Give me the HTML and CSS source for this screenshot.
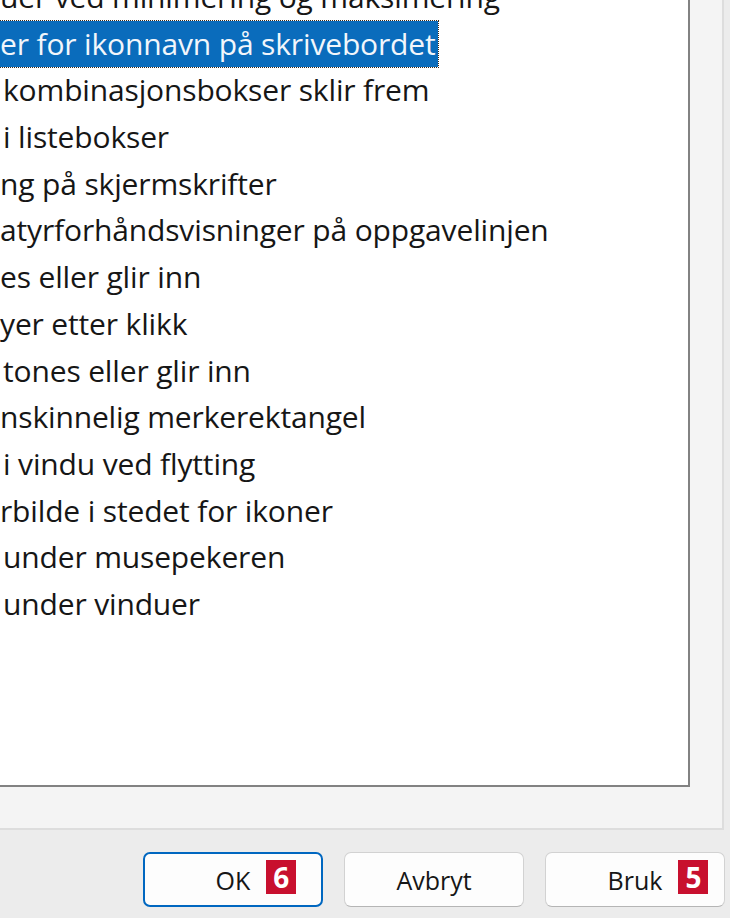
FILE: index.html
```html
<!DOCTYPE html>
<html lang="nb">
<head>
    <meta charset="UTF-8">
    <meta name="viewport" content="width=device-width, initial-scale=1.0">
    <title>Ytelsesalternativer</title>
    <link rel="stylesheet" href="styles.css">
</head>
<body>
    <div class="dialog">
        <div class="tab-panel">
            <div class="listbox">
                <ul class="options">
                    <li>uer ved minimering og maksimering</li>
                    <li class="selected"><span>er for ikonnavn på skrivebordet</span></li>
                    <li class="gap">kombinasjonsbokser sklir frem</li>
                    <li class="gap">i listebokser</li>
                    <li>ng på skjermskrifter</li>
                    <li>atyrforhåndsvisninger på oppgavelinjen</li>
                    <li>es eller glir inn</li>
                    <li>yer etter klikk</li>
                    <li class="gap">tones eller glir inn</li>
                    <li>nskinnelig merkerektangel</li>
                    <li class="gap">i vindu ved flytting</li>
                    <li>rbilde i stedet for ikoner</li>
                    <li class="gap">under musepekeren</li>
                    <li class="gap">under vinduer</li>
                </ul>
            </div>
        </div>

        <div class="buttons">
            <button class="btn default"><span class="label">OK<span class="badge">6</span></span></button>
            <button class="btn"><span class="label">Avbryt</span></button>
            <button class="btn"><span class="label">Bruk<span class="badge">5</span></span></button>
        </div>
    </div>
</body>
</html>
```

FILE: styles.css
```css
body {
    margin: 0;
    width: 730px;
    height: 918px;
    overflow: hidden;
    background-color: #ececec;
    font-family: 'Open Sans', 'Noto Sans', sans-serif;
    color: #161616;
}

.dialog {
    display: flex;
    flex-direction: column;
}

.tab-panel {
    width: 690px;
    height: 787px;
    padding: 0 32px 41px 0;
    background-color: #f4f4f4;
    border-right: 2px solid #dddddd;
    border-bottom: 2px solid #dddddd;
}

.listbox {
    height: 787px;
    overflow: hidden;
    background-color: #fff;
    border-right: 2px solid #828282;
    border-bottom: 2px solid #828282;
    box-sizing: border-box;
}

.options {
    list-style: none;
    margin: -26px 0 0 0;
    padding: 0;
    font-size: 30px;
    letter-spacing: -0.15px;
}

.options li {
    height: 46.7px;
    line-height: 46.7px;
    white-space: nowrap;
}

.options li.gap {
    padding-left: 3px;
}

.options li.selected span {
    display: inline-block;
    height: 46px;
    line-height: 46px;
    padding-right: 2px;
    background-color: #0a6cbc;
    color: #f2f6fb;
    outline: 1px dotted #3a2a1a;
}

.buttons {
    display: flex;
    justify-content: flex-end;
    gap: 21px;
    padding: 22px 5px 0 0;
}

.btn {
    width: 180px;
    height: 55px;
    border: 1px solid #d2d2d2;
    border-bottom-color: #b5b5b5;
    border-radius: 7px;
    background-color: #fdfdfd;
    font-family: 'Open Sans', 'Noto Sans', sans-serif;
    font-size: 25px;
    color: #161616;
    padding: 0;
}

.btn.default {
    border: 2px solid #0067c0;
}

.label {
    position: relative;
}

.badge {
    position: absolute;
    top: -3px;
    left: calc(100% + 16px);
    width: 30px;
    height: 34px;
    line-height: 34px;
    background-color: #c8102e;
    color: #fff;
    font-weight: bold;
    font-size: 28px;
    text-align: center;
}
```
